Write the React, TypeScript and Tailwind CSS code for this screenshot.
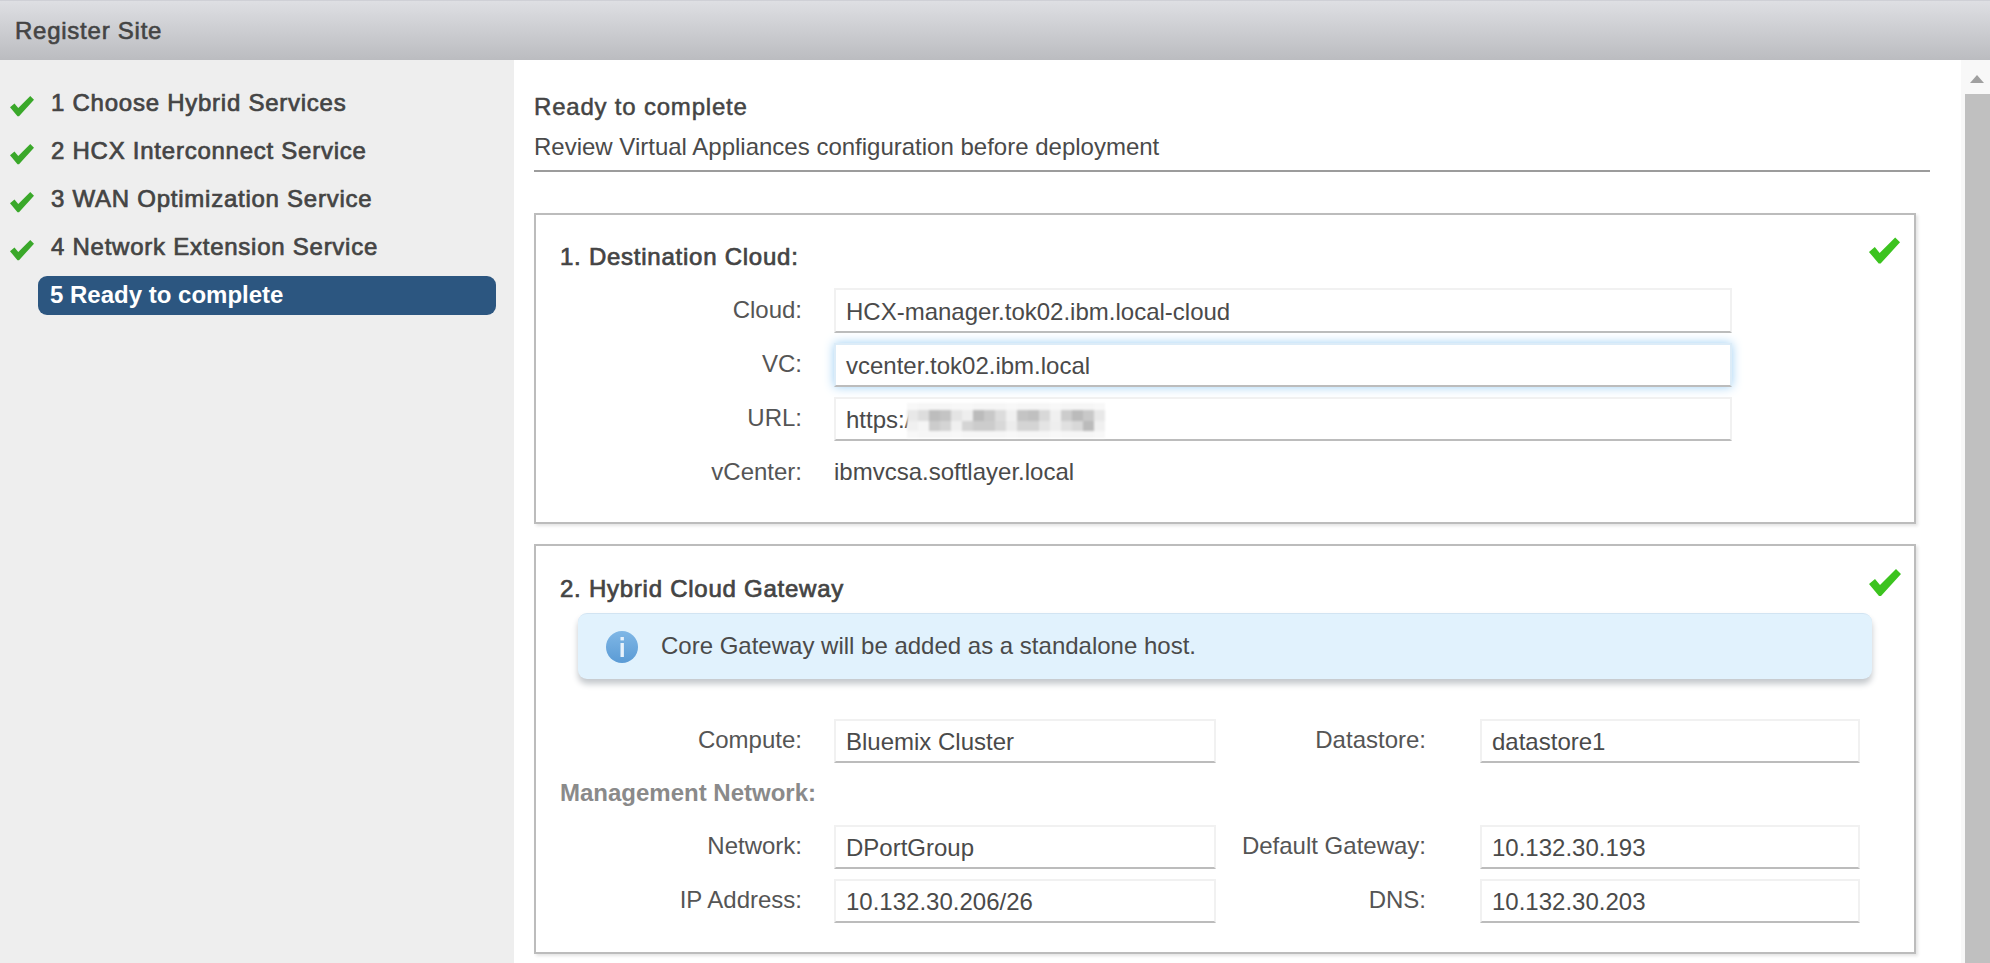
const font = "font-['Liberation_Sans',Arial,sans-serif]";

function Check({ className }: { className: string }) {
  return (
    <svg viewBox="0 0 34 28" className={className} fill="currentColor">
      <path d="M1 15 L7 10 L12 16 L28 0 L33 5 L13 27 L11 27 Z" />
    </svg>
  );
}

function Step({ text }: { text: string }) {
  return (
    <div className="flex h-[48px] items-center pl-[9px]">
      <Check className="w-[26px] h-[21px] text-[#3aa82a] mt-[6px]" />
      <span className="ml-[16px] text-[24px] tracking-[0.75px] [-webkit-text-stroke:0.7px_#444] text-[#444]">{text}</span>
    </div>
  );
}

function Field({ value, className = "", focused = false, tall = false }: { value: string; className?: string; focused?: boolean; tall?: boolean }) {
  return (
    <div
      className={
        "flex items-center pl-[10px] pt-[2px] border-2 border-[#f1f1f1] border-b-[#bcbcbc] bg-white text-[24px] text-[#4a4a4a] " +
        (tall ? "h-[45px] " : "h-[44px] ") +
        (focused ? "border-t-[#dcecf8] border-x-[#dcecf8] shadow-[0_0_10px_#9fd0f4] " : "") +
        className
      }
    >
      {value}
    </div>
  );
}

function Row({ label, value, focused, tall }: { label: string; value: string; focused?: boolean; tall?: boolean }) {
  return (
    <div className="flex items-center">
      <div className="w-[242px] text-right text-[24px] text-[#555] mt-[-2px]">{label}</div>
      <Field value={value} focused={focused} tall={tall} className="ml-[32px] w-[898px]" />
    </div>
  );
}

function DoubleRow({ l1, v1, l2, v2 }: { l1: string; v1: string; l2: string; v2: string }) {
  return (
    <div className="flex items-center">
      <div className="w-[242px] text-right text-[24px] text-[#555] mt-[-2px]">{l1}</div>
      <Field value={v1} className="ml-[32px] w-[382px]" />
      <div className="w-[210px] text-right text-[24px] text-[#555] mt-[-2px]">{l2}</div>
      <Field value={v2} className="ml-[54px] w-[380px]" />
    </div>
  );
}

const mosaic = [
  "bg-[#f8f8f8]","bg-[#f6f6f6]","bg-[#f6f6f6]","bg-[#f6f6f6]","bg-[#f8f8f8]","bg-[#f8f8f8]","bg-[#f6f6f6]","bg-[#f6f6f6]","bg-[#f6f6f6]","bg-[#f8f8f8]","bg-[#f6f6f6]","bg-[#f6f6f6]","bg-[#f6f6f6]","bg-[#f8f8f8]","bg-[#f6f6f6]","bg-[#f6f6f6]","bg-[#f6f6f6]","bg-[#f8f8f8]",
  "bg-[#e8e8e8]","bg-[#dddddd]","bg-[#bdbdbd]","bg-[#c4c4c4]","bg-[#e4e4e4]","bg-[#eeeeee]","bg-[#bbbbbb]","bg-[#c8c8c8]","bg-[#dcdcdc]","bg-[#f0f0f0]","bg-[#c4c4c4]","bg-[#c0c0c0]","bg-[#d8d8d8]","bg-[#f0f0f0]","bg-[#cccccc]","bg-[#bbbbbb]","bg-[#c8c8c8]","bg-[#e8e8e8]",
  "bg-[#f0f0f0]","bg-[#f5f5f5]","bg-[#cccccc]","bg-[#d4d4d4]","bg-[#f0f0f0]","bg-[#d4d4d4]","bg-[#cccccc]","bg-[#cccccc]","bg-[#d8d8d8]","bg-[#ececec]","bg-[#d4d4d4]","bg-[#d4d4d4]","bg-[#e4e4e4]","bg-[#eeeeee]","bg-[#e0e0e0]","bg-[#d8d8d8]","bg-[#bbbbbb]","bg-[#f0f0f0]",
  "bg-[#f8f8f8]","bg-[#f6f6f6]","bg-[#f6f6f6]","bg-[#f6f6f6]","bg-[#f8f8f8]","bg-[#f6f6f6]","bg-[#f6f6f6]","bg-[#f6f6f6]","bg-[#f6f6f6]","bg-[#f8f8f8]","bg-[#f6f6f6]","bg-[#f6f6f6]","bg-[#f6f6f6]","bg-[#f8f8f8]","bg-[#f6f6f6]","bg-[#f6f6f6]","bg-[#f6f6f6]","bg-[#f8f8f8]",
];

export default function App() {
  return (
    <div className={"flex h-[963px] w-[1990px] flex-col overflow-hidden bg-white " + font}>
      <header className="flex h-[60px] shrink-0 items-center border-t border-[#cfd0d6] bg-gradient-to-b from-[#dedfe3] to-[#bbbcc0] pl-[15px] text-[24px] tracking-[0.75px] [-webkit-text-stroke:0.6px_#444] text-[#444]">
        Register Site
      </header>
      <div className="flex min-h-0 flex-1">
        <aside className="w-[514px] shrink-0 bg-[#eeeeee] pt-[19px]">
          <Step text="1 Choose Hybrid Services" />
          <Step text="2 HCX Interconnect Service" />
          <Step text="3 WAN Optimization Service" />
          <Step text="4 Network Extension Service" />
          <div className="flex h-[48px] items-center pl-[38px]">
            <div className="flex h-[39px] w-[458px] items-center rounded-[9px] bg-[#2c5680] pl-[12px] text-[24px] font-bold text-white">
              5 Ready to complete
            </div>
          </div>
        </aside>

        <main className="min-w-0 flex-1 pl-[20px]">
          <div className="mr-[31px] border-b-2 border-[#9c9c9c] pt-[33px] pb-[9px] text-[24px] text-[#4a4a4a]">
            <div className="h-[28px] leading-[28px] tracking-[0.8px] [-webkit-text-stroke:0.5px_#444] text-[#444]">Ready to complete</div>
            <div className="mt-[12px] h-[28px] leading-[28px]">Review Virtual Appliances configuration before deployment</div>
          </div>

          <section className="mt-[41px] h-[311px] w-[1382px] border-2 border-[#bcbcbc] pl-[24px] pt-[28px] shadow-[2px_2px_3px_#e4e4e4] relative">
            <Check className="absolute right-[13px] top-[22px] w-[33px] h-[28px] text-[#3cc31f]" />
            <div className="h-[28px] leading-[28px] text-[24px] tracking-[0.75px] [-webkit-text-stroke:0.7px_#444] text-[#444]">1. Destination Cloud:</div>
            <div className="mt-[17px] flex flex-col gap-[10px]">
              <Row label="Cloud:" value="HCX-manager.tok02.ibm.local-cloud" tall />
              <Row label="VC:" value="vcenter.tok02.ibm.local" focused />
              <div className="flex items-center">
                <div className="w-[242px] text-right text-[24px] text-[#555] mt-[-2px]">URL:</div>
                <div className="ml-[32px] flex h-[44px] w-[898px] items-center border-2 border-[#f1f1f1] border-b-[#bcbcbc] pl-[10px] pt-[2px] text-[24px] text-[#4a4a4a]">
                  <span>https:/</span>
                  <div className="ml-[-4px] grid w-[198px] grid-cols-[repeat(18,11px)] grid-rows-[7px_11px_10px_7px] blur-[1px]">
                    {mosaic.map((c, i) => (
                      <div key={i} className={c} />
                    ))}
                  </div>
                </div>
              </div>
              <div className="flex items-center mt-[3px]">
                <div className="w-[242px] text-right text-[24px] text-[#555]">vCenter:</div>
                <div className="ml-[32px] text-[24px] text-[#4a4a4a]">ibmvcsa.softlayer.local</div>
              </div>
            </div>
          </section>

          <section className="mt-[20px] h-[410px] w-[1382px] border-2 border-[#bcbcbc] pl-[24px] pt-[29px] shadow-[2px_2px_3px_#e4e4e4] relative">
            <Check className="absolute right-[12px] top-[23px] w-[34px] h-[28px] text-[#3cc31f]" />
            <div className="h-[28px] leading-[28px] text-[24px] tracking-[0.75px] [-webkit-text-stroke:0.7px_#444] text-[#444]">2. Hybrid Cloud Gateway</div>
            <div className="mt-[10px] ml-[18px] flex h-[66px] w-[1294px] items-center rounded-[9px] border-t border-[#d2e4f2] bg-[#e1f2fd] pl-[28px] shadow-[0_5px_6px_#c4c8cc]">
              <svg viewBox="0 0 32 32" className="h-[32px] w-[32px]">
                <defs>
                  <linearGradient id="inf" x1="0" y1="0" x2="0" y2="1">
                    <stop offset="0" stopColor="#7fb7e6" />
                    <stop offset="1" stopColor="#5b9bd5" />
                  </linearGradient>
                </defs>
                <circle cx="16" cy="16" r="16" fill="url(#inf)" />
                <rect x="14.5" y="6" width="3.4" height="3.4" fill="#e8f2fb" />
                <rect x="14.5" y="12" width="3.4" height="14" fill="#e8f2fb" />
              </svg>
              <span className="ml-[23px] mt-[-2px] text-[24px] text-[#4a4a4a]">Core Gateway will be added as a standalone host.</span>
            </div>
            <div className="mt-[40px]">
              <DoubleRow l1="Compute:" v1="Bluemix Cluster" l2="Datastore:" v2="datastore1" />
            </div>
            <div className="mt-[16px] h-[28px] leading-[28px] text-[24px] font-bold text-[#8a8a8a]">Management Network:</div>
            <div className="mt-[18px]">
              <DoubleRow l1="Network:" v1="DPortGroup" l2="Default Gateway:" v2="10.132.30.193" />
            </div>
            <div className="mt-[10px]">
              <DoubleRow l1="IP Address:" v1="10.132.30.206/26" l2="DNS:" v2="10.132.30.203" />
            </div>
          </section>
        </main>

        <div className="flex w-[29px] shrink-0 flex-col bg-[#f8f8f8]">
          <svg viewBox="0 0 14 8" className="ml-[9px] mt-[15px] h-[8px] w-[14px]" fill="#a0a0a0">
            <path d="M7 0 L14 8 L0 8 Z" />
          </svg>
          <div className="ml-[4px] mt-[11px] flex-1 bg-[#c0c0c0]" />
        </div>
      </div>
    </div>
  );
}
